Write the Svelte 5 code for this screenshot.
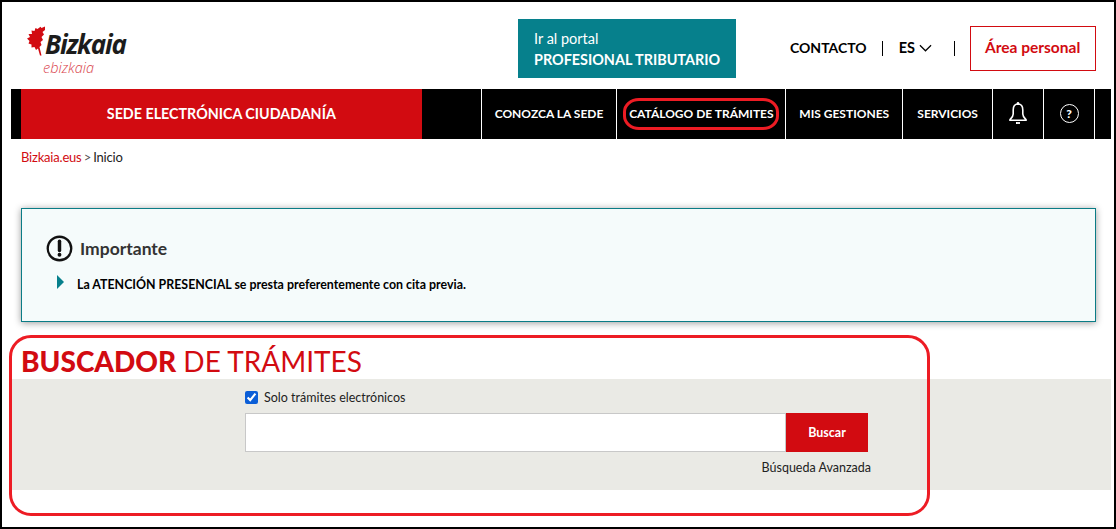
<script>
  const navItems = [
    { label: 'CONOZCA LA SEDE', width: 136 },
    { label: 'CATÁLOGO DE TRÁMITES', width: 169, ringed: true },
    { label: 'MIS GESTIONES', width: 117 },
    { label: 'SERVICIOS', width: 90 }
  ];
  let onlyElectronic = $state(true);
  let query = $state('');
</script>

<div class="page">
  <header class="top">
    <a class="logo" href="#inicio">
      <svg class="leaf" viewBox="0 0 20 30" width="20" height="30" aria-hidden="true">
        <path d="M18 .5 L14.5 2 L13.5 .8 L10.5 3 L8.5 2 L7.5 5 L4.5 4.5 L5 8 L1.5 8 L3 11 L0 12.5 L2.5 15 L1.5 17.5 L4.5 18.5 L4.5 21.5 L7.5 21 L9 24 L11 22.5 L13 29.5 L14.5 29.5 L12.5 21 L14.5 19 L13.5 16 L16 14 L14.5 11 L17 8.5 L15.5 6 L18 4 Z" fill="#d20b11" />
      </svg>
      <span class="logo-text">
        <span class="brand">Bizkaia</span>
        <span class="sub">ebizkaia</span>
      </span>
    </a>

    <a class="portal" href="#portal">
      <span>Ir al portal</span>
      <strong>PROFESIONAL TRIBUTARIO</strong>
    </a>

    <a class="contact" href="#contacto">CONTACTO</a>
    <span class="rule"></span>
    <button class="lang">
      ES
      <svg viewBox="0 0 14 8" width="13" height="8" aria-hidden="true">
        <path d="M1 1 L7 7 L13 1" fill="none" stroke="#000" stroke-width="1.3" />
      </svg>
    </button>
    <span class="rule"></span>
    <a class="personal" href="#personal">Área personal</a>
  </header>

  <nav class="nav">
    <a class="site" href="#sede">SEDE ELECTRÓNICA CIUDADANÍA</a>
    <div class="spacer"></div>
    {#each navItems as item}
      <a class="item" style="width: {item.width}px" href="#nav">
        {#if item.ringed}
          <span class="ring"></span>
        {/if}
        {item.label}
      </a>
    {/each}
    <a class="item icon" style="width: 51px" href="#avisos" aria-label="Avisos">
      <svg viewBox="0 0 20 24" width="20" height="24" aria-hidden="true">
        <path d="M10 3 C6.8 3 5.2 5.5 5.2 9 V13 C5.2 15.5 3.5 17 2 18.6 V19.2 H18 V18.6 C16.5 17 14.8 15.5 14.8 13 V9 C14.8 5.5 13.2 3 10 3 Z" fill="none" stroke="#fff" stroke-width="1.6" />
        <circle cx="10" cy="2.2" r="1.3" fill="#fff" />
        <path d="M8 22 H12" stroke="#fff" stroke-width="1.8" />
      </svg>
    </a>
    <a class="item icon" style="width: 51px" href="#ayuda" aria-label="Ayuda">
      <span class="help">?</span>
    </a>
    <div class="tail"></div>
  </nav>

  <p class="crumbs"><a href="#bizkaia">Bizkaia.eus</a> <span class="gt">&gt;</span> Inicio</p>

  <section class="notice">
    <h2>
      <svg viewBox="0 0 28 28" width="27" height="27" aria-hidden="true">
        <circle cx="14" cy="14" r="12.2" fill="none" stroke="#111" stroke-width="2.4" />
        <path d="M14 6.5 V16" stroke="#111" stroke-width="3.6" stroke-linecap="round" />
        <circle cx="14" cy="20.5" r="2" fill="#111" />
      </svg>
      Importante
    </h2>
    <p class="note"><span class="arrow"></span>La ATENCIÓN PRESENCIAL se presta preferentemente con cita previa.</p>
  </section>

  <section class="search">
    <span class="search-ring"></span>
    <h1><strong>BUSCADOR</strong> DE TRÁMITES</h1>
    <div class="band">
      <form class="form" onsubmit={(e) => e.preventDefault()}>
        <label class="check">
          <input type="checkbox" bind:checked={onlyElectronic} />
          Solo trámites electrónicos
        </label>
        <div class="field">
          <input class="query" type="text" bind:value={query} />
          <button class="go" type="submit">Buscar</button>
        </div>
        <a class="advanced" href="#avanzada">Búsqueda Avanzada</a>
      </form>
    </div>
  </section>
</div>

<style>
  :global(body) {
    margin: 0;
    background: #fff;
  }
  a {
    text-decoration: none;
    color: inherit;
  }
  .page {
    position: relative;
    box-sizing: border-box;
    width: 1116px;
    height: 529px;
    border: 2px solid #000;
    overflow: hidden;
    font-family: Lato, "Open Sans", sans-serif;
    color: #111;
    padding: 0 3px 0 9px;
  }

  .top {
    display: flex;
    align-items: center;
    box-sizing: border-box;
    height: 87px;
    padding-top: 6px;
  }
  .logo {
    display: flex;
    align-items: flex-start;
    width: 491px;
    height: 52px;
    margin-left: 16px;
    margin-top: 7px;
  }
  .leaf {
    flex: none;
  }
  .logo-text {
    display: flex;
    flex-direction: column;
    margin-left: -2px;
    font-family: "Open Sans", sans-serif;
    font-style: italic;
  }
  .brand {
    margin-top: 5px;
    font-size: 26px;
    font-weight: 700;
    line-height: 26px;
    letter-spacing: -1.2px;
    color: #1c1c1c;
  }
  .sub {
    margin: 2px 0 0 -2px;
    font-size: 14.5px;
    font-weight: 300;
    line-height: 18px;
    color: #d9434b;
  }
  .portal {
    display: flex;
    flex-direction: column;
    justify-content: center;
    gap: 4px;
    box-sizing: border-box;
    width: 218px;
    height: 59px;
    padding-left: 16px;
    background: #06808c;
    color: #fff;
    font-size: 14.5px;
  }
  .portal strong {
    font-size: 14.4px;
    font-weight: 700;
  }
  .contact {
    margin: -2px 0 0 54px;
    font-size: 14px;
    font-weight: 700;
    color: #000;
  }
  .rule {
    width: 1px;
    height: 15px;
    background: #000;
    margin-left: 15px;
  }
  .lang {
    display: flex;
    align-items: center;
    gap: 4px;
    box-sizing: border-box;
    width: 71px;
    margin-top: -2px;
    padding: 0 0 0 16px;
    border: 0;
    background: none;
    font: 700 14.5px Lato, sans-serif;
    color: #000;
  }
  .lang + .rule {
    margin-left: 0;
  }
  .personal {
    box-sizing: border-box;
    width: 126px;
    height: 45px;
    margin-left: 15px;
    border: 1px solid #d20b11;
    color: #d20b11;
    font-size: 15.5px;
    font-weight: 700;
    line-height: 41px;
    text-align: center;
  }

  .nav {
    display: flex;
    height: 50px;
    width: 1100px;
    background: #000;
    color: #fff;
    font-size: 12px;
    font-weight: 700;
  }
  .site {
    box-sizing: border-box;
    width: 401px;
    margin-left: 10px;
    background: #d20b11;
    font-size: 14.3px;
    line-height: 50px;
    text-align: center;
  }
  .spacer {
    width: 59px;
  }
  .item {
    position: relative;
    display: flex;
    align-items: center;
    justify-content: center;
    box-sizing: border-box;
    padding-bottom: 2px;
    border-left: 1px solid #fff;
    white-space: nowrap;
  }
  .tail {
    width: 16px;
    border-left: 1px solid #fff;
  }
  .ring {
    position: absolute;
    left: 6px;
    top: 9px;
    width: 156px;
    height: 32px;
    box-sizing: border-box;
    border: 3px solid #ed1c24;
    border-radius: 16px / 14px;
  }
  .help {
    display: block;
    box-sizing: border-box;
    width: 19px;
    height: 19px;
    border: 1px solid #fff;
    border-radius: 50%;
    font-size: 12px;
    font-weight: 900;
    line-height: 17px;
    text-align: center;
  }

  .crumbs {
    margin: 11px 0 0 10px;
    height: 15px;
    font-size: 13px;
    line-height: 15px;
    letter-spacing: -0.2px;
    word-spacing: -1px;
    color: #222;
  }
  .crumbs a {
    color: #d20b11;
  }
  .gt {
    color: #555;
  }

  .notice {
    box-sizing: border-box;
    width: 1075px;
    height: 114px;
    margin: 43px 0 0 10px;
    padding: 26px 24px 0;
    border: 1px solid #0a7c86;
    background: #f5fbfb;
    box-shadow: 0 1px 7px rgba(0, 0, 0, 0.4);
  }
  .notice h2 {
    display: flex;
    align-items: center;
    gap: 7px;
    margin: 0;
    font-size: 17.5px;
    font-weight: 700;
    color: #333;
  }
  .note {
    display: flex;
    align-items: center;
    margin: 15px 0 0 11px;
    font-size: 12.4px;
    font-weight: 700;
    color: #000;
  }
  .arrow {
    width: 0;
    height: 0;
    margin: -6px 13px 0 0;
    border-left: 7px solid #06808c;
    border-top: 7px solid transparent;
    border-bottom: 7px solid transparent;
  }

  .search {
    margin-top: 24px;
  }
  .search-ring {
    position: absolute;
    left: 7px;
    top: 333px;
    width: 921px;
    height: 181px;
    box-sizing: border-box;
    border: 3px solid #ed1c24;
    border-radius: 22px;
    z-index: 1;
  }
  .search h1 {
    margin: 0 0 0 10px;
    height: 33px;
    font-size: 28px;
    font-weight: 400;
    line-height: 31px;
    color: #d20b11;
    white-space: nowrap;
  }
  .search h1 strong {
    font-weight: 900;
  }
  .band {
    width: 1100px;
    height: 111px;
    background: #eaeae5;
  }
  .form {
    display: flex;
    flex-direction: column;
    width: 626px;
    margin-left: 234px;
    padding-top: 10px;
  }
  .check {
    display: flex;
    align-items: center;
    gap: 6px;
    height: 16px;
    font-size: 12.5px;
    color: #222;
  }
  .check input {
    width: 13px;
    height: 13px;
    margin: 0;
    accent-color: #0b5ed7;
  }
  .field {
    display: flex;
    margin-top: 8px;
    height: 39px;
  }
  .query {
    box-sizing: border-box;
    width: 541px;
    height: 39px;
    border: 1px solid #c8c8c8;
    background: #fff;
    outline: none;
  }
  .go {
    width: 82px;
    height: 39px;
    border: 0;
    background: #d20b11;
    color: #fff;
    font: 700 12.5px Lato, sans-serif;
  }
  .advanced {
    align-self: flex-end;
    margin-top: 8px;
    font-size: 12.5px;
    line-height: 15px;
    color: #222;
  }
</style>
